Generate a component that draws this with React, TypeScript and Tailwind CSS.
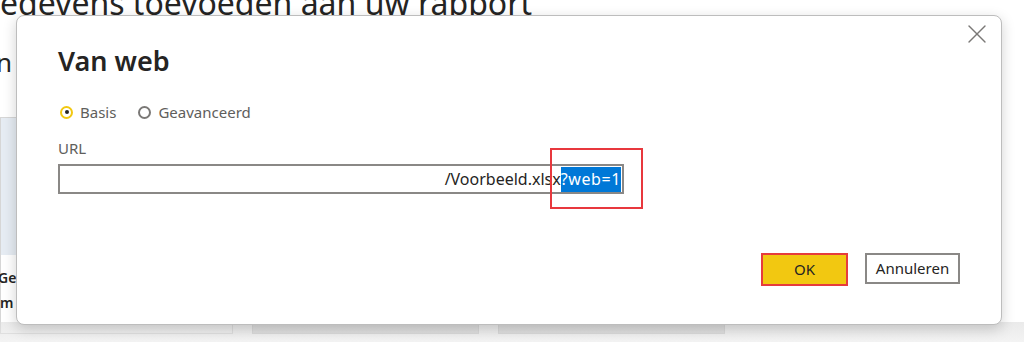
import { X } from "lucide-react";

function Radio({ label, checked }: { label: string; checked?: boolean }) {
  return (
    <label className="flex items-center gap-[7px]">
      <span
        className={
          checked
            ? "flex h-[13px] w-[13px] items-center justify-center rounded-full border-[2px] border-[#f2c811] bg-white"
            : "flex h-[13px] w-[13px] items-center justify-center rounded-full border-[2px] border-[#7a7876] bg-white"
        }
      >
        {checked && <span className="h-[4px] w-[4px] rounded-full bg-[#252423]" />}
      </span>
      <span className="text-[15px] leading-[20px] text-[#605e5c]">{label}</span>
    </label>
  );
}

export default function App() {
  return (
    <div className="relative h-[342px] w-[1024px] overflow-hidden bg-white font-['Noto_Sans',sans-serif]">
      {/* Page behind the dialog */}
      <div className="flex flex-col">
        <h1 className="-mt-[17px] whitespace-nowrap text-[32px] leading-[40px] text-[#252423]">
          egevens toevoegen aan uw rapport
        </h1>
        <p className="-ml-[4px] mt-[23px] text-[26px] leading-[32px] text-[#252423]">n</p>

        {/* Cards */}
        <div className="mt-[39px] flex gap-[19px]">
          <div className="flex h-[217px] w-[233px] flex-col border border-[#d6d6d6] bg-white">
            <div className="h-[137px] bg-[#e6ecf3]" />
            <p className="-ml-[3px] mt-[10px] text-[14px] font-semibold leading-[25px] text-[#252423]">
              Ge
            </p>
            <p className="-ml-[1px] text-[14px] font-semibold leading-[25px] text-[#252423]">m</p>
          </div>
          <div className="h-[217px] w-[227px] border border-[#c9c9c9] bg-[#d9d9d9]" />
          <div className="h-[217px] w-[227px] border border-[#c9c9c9] bg-[#d9d9d9]" />
        </div>
      </div>

      {/* Bottom shade under the dialog */}
      <div className="absolute bottom-0 left-0 h-[20px] w-[1024px] bg-gradient-to-b from-[#dcdcdc]/60 to-[#ececec]/60" />

      {/* Dialog */}
      <div className="absolute left-[16px] top-[15px] flex h-[310px] w-[986px] flex-col rounded-[8px] border border-[#bdbdbd] bg-white pl-[41px] pr-[41px] pt-[27px] shadow-[0_4px_14px_rgba(0,0,0,0.18)]">
        <button className="absolute right-[8px] top-[2px] text-[#7a7876]">
          <X size={32} strokeWidth={1} />
        </button>

        <h2 className="text-[27px] font-semibold leading-[36px] text-[#252423]">Van web</h2>

        <div className="mt-[23px] flex items-center gap-[22px] pl-[2px]">
          <Radio label="Basis" checked />
          <Radio label="Geavanceerd" />
        </div>

        <span className="mt-[16px] text-[15px] leading-[20px] text-[#605e5c]">URL</span>

        <div className="mt-[6px] flex h-[30px] w-[566px] items-center justify-end border-[2px] border-[#8a8886] bg-white pr-[1px]">
          <span className="whitespace-nowrap text-[16px] leading-[25px] text-[#252423]">
            /Voorbeeld.xlsx
          </span>
          <span className="whitespace-nowrap bg-[#0078d7] text-[16px] leading-[25px] tracking-[0.6px] text-white">
            ?web=1
          </span>
        </div>

        <div className="mt-auto mb-[38px] flex items-start justify-end gap-[17px]">
          <button className="h-[33px] w-[87px] border-[2px] border-[#e63c3c] bg-[#f2c811] text-[15px] text-[#252423]">
            OK
          </button>
          <button className="h-[31px] w-[95px] border-[2px] border-[#8a8886] bg-white text-[15px] text-[#252423]">
            Annuleren
          </button>
        </div>
      </div>

      {/* Red annotation box */}
      <div className="absolute left-[550px] top-[148px] h-[61px] w-[93px] border-[2px] border-[#e8383d]" />
    </div>
  );
}
